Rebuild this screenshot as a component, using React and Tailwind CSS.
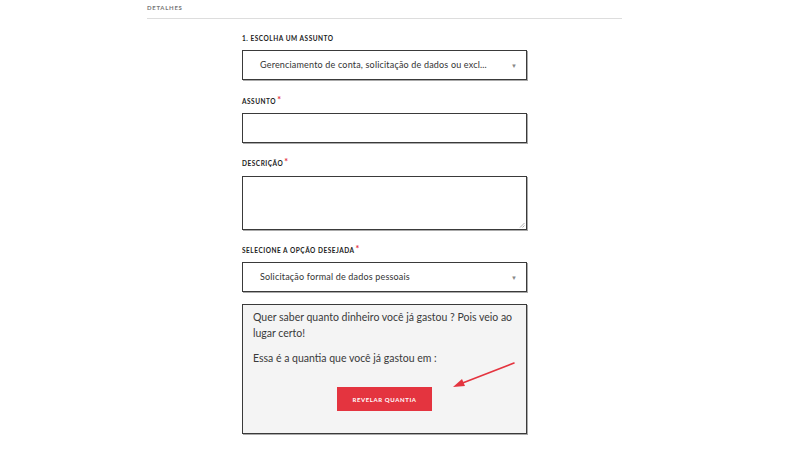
import React from 'react';

const Label = ({ children, required, className = '' }) => (
    <div className={`h-[10px] leading-[10px] text-[6.5px] font-bold uppercase tracking-[0.08em] text-[#222] ${className}`}>
        {children}
        {required && <span className="text-[#e4343f] text-[9px] align-top relative -top-[2px] ml-[1px]">*</span>}
    </div>
);

const Select = ({ value, className = '' }) => (
    <div className={`h-[30px] border border-[#3a3a3a] shadow-[1px_1px_0_#aaa] bg-white flex items-center pl-[17px] pr-[9px] ${className}`}>
        <span className="flex-1 min-w-0 whitespace-nowrap text-[9px] tracking-[0.02em] text-[#333]">{value}</span>
        <span className="text-[6px] text-[#888] ml-2 shrink-0">▼</span>
    </div>
);

export default function App() {
    return (
        <div className="w-[800px] h-[450px] bg-white overflow-hidden" style={{ fontFamily: 'Lato, "Open Sans", sans-serif' }}>
            <div className="w-[475px] ml-[147px]">
                {/* Header */}
                <div className="pt-[4px] pb-[6px] border-b border-[#ddd]">
                    <div className="h-[8px] leading-[8px] text-[6px] font-bold uppercase tracking-[0.12em] text-[#777]">Detalhes</div>
                </div>

                {/* Form */}
                <div className="w-[285px] mx-auto pt-[15px]">
                    <Label>1. Escolha um assunto</Label>
                    <Select className="mt-[6px]" value="Gerenciamento de conta, solicitação de dados ou excl..." />

                    <Label required className="mt-[17px]">Assunto</Label>
                    <div className="mt-[6px] h-[30px] border border-[#3a3a3a] shadow-[1px_1px_0_#aaa] bg-white" />

                    <Label required className="mt-[16px]">Descrição</Label>
                    <div className="mt-[7px] h-[54px] border border-[#3a3a3a] shadow-[1px_1px_0_#aaa] bg-white relative">
                        <svg className="absolute right-[1px] bottom-[1px]" width="6" height="6" viewBox="0 0 6 6">
                            <path d="M5.5 1 L1 5.5 M5.5 3.5 L3.5 5.5" stroke="#999" strokeWidth="0.8" />
                        </svg>
                    </div>

                    <Label required className="mt-[16px]">Selecione a opção desejada</Label>
                    <Select className="mt-[6px]" value="Solicitação formal de dados pessoais" />

                    {/* Info box */}
                    <div className="mt-[12px] h-[130px] border border-[#3a3a3a] shadow-[1px_1px_0_#aaa] bg-[#f4f4f4] px-[10px] pt-[4px] relative">
                        <p className="text-[10.5px] leading-[16px] text-[#3a3a3a]">
                            Quer saber quanto dinheiro você já gastou ? Pois veio ao lugar certo!
                        </p>
                        <p className="mt-[9px] text-[10.5px] leading-[16px] text-[#3a3a3a]">
                            Essa é a quantia que você já gastou em :
                        </p>
                        <div className="flex justify-center mt-[21px]">
                            <button className="w-[95px] h-[24px] bg-[#e4343f] text-white text-[6px] font-bold uppercase tracking-[0.1em]">
                                Revelar quantia
                            </button>
                        </div>
                        <svg className="absolute left-[205px] top-[52px]" width="70" height="32" viewBox="0 0 70 32">
                            <path d="M66 6 L12 27" stroke="#e4343f" strokeWidth="1.6" strokeLinecap="round" />
                            <path d="M5 30 L14 22 L17 29 Z" fill="#e4343f" />
                        </svg>
                    </div>
                </div>
            </div>
        </div>
    );
}
